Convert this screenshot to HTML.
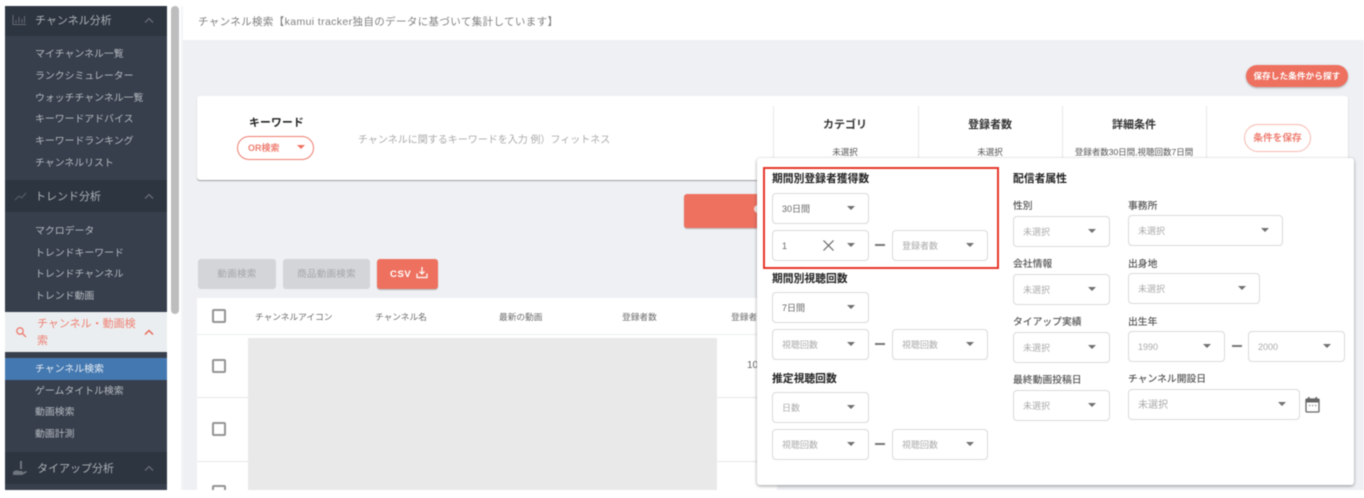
<!DOCTYPE html>
<html lang="ja"><head><meta charset="utf-8">
<style>
html,body{margin:0;padding:0;background:#fff}
#w{position:relative;width:1364px;height:498px;overflow:hidden;background:#fff;font-family:"Liberation Sans","Noto Sans CJK JP",sans-serif;filter:blur(.5px)}
#w div,#w span.t{position:absolute;white-space:nowrap;box-sizing:border-box}
.h{left:5px;width:162px;background:#2d3540}
.ht{left:35px;font-size:11px;line-height:16px;color:#aeb2b7;margin-top:1px}
.i{left:35px;font-size:9.900px;line-height:14px;color:#b6babf;margin-top:2px}
.card{background:#fff;border-radius:3px}
.lb{font-size:9.800px;line-height:14px;color:#555;font-weight:500;margin-top:1px}
.lb.r{margin-top:2px}
.sec{font-size:10.800px;line-height:14px;color:#222;font-weight:700;margin-top:1px}
.s{background:#fff;border:1px solid #dadada;border-radius:4px;height:31px;font-size:9px;line-height:31px;color:#aaa;padding-left:9px}
.s.v{color:#666;line-height:30px}
.s i{position:absolute;right:13.500px;top:12px;width:0;height:0;border-left:4.500px solid transparent;border-right:4.500px solid transparent;border-top:4.500px solid #707070}
.d{width:10px;height:1.500px;background:#777}
.th{font-size:8.700px;line-height:12px;color:#6c6c6c;top:311px}
.cb{left:212px;width:14px;height:14px;border:2px solid #939393;border-radius:2px;background:#fff}
.ln{background:#eceef0;height:1px}
.dv{width:1px;background:#e8e8e8;top:106px;height:52px}
.ct{font-size:11px;line-height:14px;font-weight:700;color:#333;width:100px;text-align:center;top:118px}
.cv{font-size:8.500px;line-height:12px;color:#555;width:144px;text-align:center;top:146px}
</style></head><body><div id="w">

<!-- sidebar -->
<div style="left:5px;top:6px;width:162px;height:484px;background:#373f4d"></div>
<div class="h" style="top:6px;height:30px"></div>
<div class="h" style="top:180px;height:32px"></div>
<div class="h" style="top:452px;height:32px"></div>
<svg style="position:absolute;left:12px;top:14px" width="15" height="12" viewBox="0 0 15 12" fill="none" stroke="#656b74" stroke-width="1"><path d="M1 1V10.500H14M4 9V6M7 9V3M10 9V5M12.500 9V2"/></svg>
<svg style="position:absolute;left:14px;top:192px" width="13" height="9" viewBox="0 0 13 9" fill="none" stroke="#5c626b" stroke-width="1"><path d="M1 8L5 4L7.500 6L12 1"/></svg>
<svg style="position:absolute;left:12px;top:460px" width="16" height="16" viewBox="0 0 16 16" fill="#71767e"><path d="M1 12C3 10 5 10 7 11H10C11 11 11 12.500 10 12.500H7.500H10.500L14 11C15 11 15 12 14.500 12.500L10 15H1Z"/><rect x="8" y="1" width="2" height="8"/></svg>
<svg style="position:absolute;left:144px;top:17px" width="10" height="7" viewBox="0 0 10 7" fill="none" stroke="#666c75" stroke-width="1.300"><path d="M1 5.500L5 1.500L9 5.500"/></svg>
<svg style="position:absolute;left:144px;top:193px" width="10" height="7" viewBox="0 0 10 7" fill="none" stroke="#666c75" stroke-width="1.300"><path d="M1 5.500L5 1.500L9 5.500"/></svg>
<svg style="position:absolute;left:144px;top:465px" width="10" height="7" viewBox="0 0 10 7" fill="none" stroke="#666c75" stroke-width="1.300"><path d="M1 5.500L5 1.500L9 5.500"/></svg>
<div class="ht" style="top:12px">チャンネル分析</div>
<div class="ht" style="top:188px">トレンド分析</div>
<div class="ht" style="top:460px;left:37px">タイアップ分析</div>
<div class="i" style="top:46px">マイチャンネル一覧</div>
<div class="i" style="top:68px">ランクシミュレーター</div>
<div class="i" style="top:90px">ウォッチチャンネル一覧</div>
<div class="i" style="top:111px">キーワードアドバイス</div>
<div class="i" style="top:133px">キーワードランキング</div>
<div class="i" style="top:155px">チャンネルリスト</div>
<div class="i" style="top:223px">マクロデータ</div>
<div class="i" style="top:245px">トレンドキーワード</div>
<div class="i" style="top:266px">トレンドチャンネル</div>
<div class="i" style="top:288px">トレンド動画</div>
<div style="left:5px;top:312px;width:162px;height:40px;background:#ebeef0"></div>
<div style="left:37px;top:316px;font-size:11px;line-height:17px;color:#ee8174">チャンネル・動画検<br>索</div>
<svg style="position:absolute;left:15px;top:326px" width="12" height="12" viewBox="0 0 12 12" fill="none" stroke="#ee7d70" stroke-width="1.300"><circle cx="5" cy="5" r="3.200"/><path d="M7.500 7.500L11 11"/></svg>
<svg style="position:absolute;left:143px;top:328px" width="12" height="8" viewBox="0 0 12 8" fill="none" stroke="#e8695a" stroke-width="1.500"><path d="M2 6.500L6 2.500L10 6.500"/></svg>
<div style="left:5px;top:358px;width:162px;height:22px;background:#4478b0"></div>
<div class="i" style="top:361px;color:#e6edf4">チャンネル検索</div>
<div class="i" style="top:383px">ゲームタイトル検索</div>
<div class="i" style="top:404px">動画検索</div>
<div class="i" style="top:426px">動画計測</div>

<!-- scrollbar -->
<div style="left:171px;top:6px;width:8px;height:308px;background:#bdbdbd;border-radius:4px"></div>

<!-- main -->
<div style="left:181px;top:6px;width:1183px;height:484px;background:#eef0f4"></div>
<div style="left:181px;top:6px;width:2px;height:484px;background:#f4f5f7"></div>
<div style="left:183px;top:6px;width:1181px;height:34px;background:#fff"></div>
<div style="left:198px;top:14px;font-size:10.500px;line-height:16px;color:#808080;letter-spacing:.37px">チャンネル検索【kamui tracker独自のデータに基づいて集計しています】</div>

<div style="left:1246px;top:65px;width:102px;height:22px;border-radius:11px;background:#ee7160;box-shadow:0 1px 2px rgba(0,0,0,.3);color:#fff;font-size:8.500px;font-weight:700;line-height:23px;text-align:center;letter-spacing:.2px">保存した条件から探す</div>

<div class="card" style="left:197px;top:96px;width:1151px;height:84px;box-shadow:0 1px 1px rgba(0,0,0,.35)"></div>
<div style="left:249px;top:116px;font-size:10.800px;line-height:14px;font-weight:700;color:#222;letter-spacing:.2px">キーワード</div>
<div style="left:237px;top:136px;width:77px;height:24px;border:1.500px solid #ee7d70;border-radius:12px;background:#fff;color:#ee7d70;font-size:9px;font-weight:700;line-height:23px;padding-left:10px">OR検索<span style="position:absolute;left:59px;top:8px;width:0;height:0;border-left:4px solid transparent;border-right:4px solid transparent;border-top:4.500px solid #ee7160"></span></div>
<div style="left:358px;top:133px;font-size:10px;line-height:15px;color:#aaa">チャンネルに関するキーワードを入力 例）フィットネス</div>
<div class="dv" style="left:773px"></div><div class="dv" style="left:918px"></div><div class="dv" style="left:1062px"></div><div class="dv" style="left:1206px"></div>
<div class="ct" style="left:795px">カテゴリ</div>
<div class="ct" style="left:940px">登録者数</div>
<div class="ct" style="left:1084px">詳細条件</div>
<div class="cv" style="left:773px">未選択</div>
<div class="cv" style="left:918px">未選択</div>
<div class="cv" style="left:1062px">登録者数30日間,視聴回数7日間</div>
<div style="left:1244px;top:124px;width:67px;height:28px;border:1px solid #f7b9b0;border-radius:14px;color:#ee7d70;font-size:9.700px;font-weight:700;line-height:27px;text-align:center;background:#fff">条件を保存</div>

<div style="left:684px;top:194px;width:100px;height:34px;border-radius:3px;background:#ee7160;box-shadow:0 1px 1px rgba(0,0,0,.25)"></div>
<div style="left:754px;top:205px;width:8px;height:8px;border-radius:50%;background:#f5e9e6"></div>

<div style="left:198px;top:259px;width:78px;height:30px;border-radius:3px;background:#d3d5d9;color:#a3a5a9;font-size:9.500px;line-height:31px;text-align:center;letter-spacing:.3px">動画検索</div>
<div style="left:283px;top:259px;width:87px;height:30px;border-radius:3px;background:#d3d5d9;color:#a3a5a9;font-size:9.500px;line-height:31px;text-align:center;letter-spacing:.3px">商品動画検索</div>
<div style="left:377px;top:259px;width:61px;height:30px;border-radius:3px;background:#ee7160;color:#fff;font-size:9.500px;font-weight:700;line-height:31px;padding-left:13px;letter-spacing:.6px;box-shadow:0 1px 1px rgba(0,0,0,.25)">CSV</div>
<svg style="position:absolute;left:416px;top:266px" width="12" height="13" viewBox="0 0 12 13" fill="none" stroke="#fff" stroke-width="1.200"><path d="M6 1V8M3.500 5.500L6 8L8.500 5.500M1 7.500V11.500H11V7.500"/></svg>

<!-- table -->
<div style="left:197px;top:298px;width:580px;height:192px;background:#fff"></div>
<div class="ln" style="left:197px;top:334px;width:580px"></div>
<div class="ln" style="left:197px;top:397px;width:580px;background:#e6e7e9"></div>
<div class="ln" style="left:197px;top:461px;width:580px;background:#e6e7e9"></div>
<div class="cb" style="top:309px"></div>
<div class="cb" style="top:359px"></div>
<div class="cb" style="top:422px"></div>
<div class="cb" style="top:485px"></div>
<div class="th" style="left:255px">チャンネルアイコン</div>
<div class="th" style="left:375px">チャンネル名</div>
<div class="th" style="left:499px">最新の動画</div>
<div class="th" style="left:622px">登録者数</div>
<div class="th" style="left:731px">登録者数</div>
<div style="left:248px;top:338px;width:469px;height:152px;background:#e9e9e9"></div>
<div style="left:747px;top:359px;font-size:10px;line-height:14px;color:#666">10</div>

<!-- popup -->
<div class="card" style="left:757px;top:158px;width:597px;height:327px;box-shadow:0 1px 3px rgba(0,0,0,.4)"></div>
<div style="left:763px;top:167px;width:236px;height:102px;border:2.500px solid #e5352a"></div>

<div class="sec" style="left:772px;top:171px">期間別登録者獲得数</div>
<div class="s v" style="left:772px;top:193px;width:97px">30日間<i></i></div>
<div class="s v" style="left:772px;top:230px;width:97px">1<i></i></div>
<svg style="position:absolute;left:822px;top:239px" width="13" height="13" viewBox="0 0 13 13" fill="none" stroke="#666" stroke-width="1.200"><path d="M1.500 1.500L11.500 11.500M11.500 1.500L1.500 11.500"/></svg>
<div class="d" style="left:875px;top:244px"></div>
<div class="s" style="left:892px;top:230px;width:96px">登録者数<i></i></div>

<div class="sec" style="left:772px;top:271px">期間別視聴回数</div>
<div class="s v" style="left:772px;top:292px;width:97px">7日間<i></i></div>
<div class="s" style="left:772px;top:329px;width:97px">視聴回数<i></i></div>
<div class="d" style="left:875px;top:343px"></div>
<div class="s" style="left:892px;top:329px;width:96px">視聴回数<i></i></div>

<div class="sec" style="left:772px;top:371px">推定視聴回数</div>
<div class="s" style="left:772px;top:392px;width:97px">日数<i></i></div>
<div class="s" style="left:772px;top:429px;width:97px">視聴回数<i></i></div>
<div class="d" style="left:875px;top:443px"></div>
<div class="s" style="left:892px;top:429px;width:96px">視聴回数<i></i></div>

<div class="sec" style="left:1013px;top:171px">配信者属性</div>
<div class="lb" style="left:1013px;top:199px">性別</div>
<div class="s" style="left:1013px;top:216px;width:97px">未選択<i></i></div>
<div class="lb r" style="left:1128px;top:198px">事務所</div>
<div class="s" style="left:1128px;top:215px;width:155px">未選択<i></i></div>
<div class="lb" style="left:1013px;top:257px">会社情報</div>
<div class="s" style="left:1013px;top:274px;width:97px">未選択<i></i></div>
<div class="lb r" style="left:1128px;top:256px">出身地</div>
<div class="s" style="left:1128px;top:273px;width:132px">未選択<i></i></div>
<div class="lb" style="left:1013px;top:315px">タイアップ実績</div>
<div class="s" style="left:1013px;top:332px;width:97px">未選択<i></i></div>
<div class="lb r" style="left:1128px;top:314px">出生年</div>
<div class="s" style="left:1128px;top:331px;width:97px">1990<i></i></div>
<div class="d" style="left:1232px;top:345px"></div>
<div class="s" style="left:1248px;top:331px;width:97px">2000<i></i></div>
<div class="lb" style="left:1013px;top:373px">最終動画投稿日</div>
<div class="s" style="left:1013px;top:390px;width:97px">未選択<i></i></div>
<div class="lb" style="left:1128px;top:372px">チャンネル開設日</div>
<div class="s" style="left:1128px;top:389px;width:172px;font-size:10px">未選択<i></i></div>
<svg style="position:absolute;left:1305px;top:396px" width="15" height="17" viewBox="0 0 15 17" fill="none"><rect x="1" y="3" width="13" height="13" rx="1" stroke="#666" stroke-width="1.300"/><rect x="1" y="3" width="13" height="3.500" fill="#666"/><rect x="3" y="1" width="1.600" height="3" fill="#666"/><rect x="10.400" y="1" width="1.600" height="3" fill="#666"/><path d="M4 9.500H5.200M7 9.500H8.200M10 9.500H11.200" stroke="#666" stroke-width="1.100"/></svg>

<div style="left:0;top:490px;width:1364px;height:8px;background:#fff"></div>
</div></body></html>
